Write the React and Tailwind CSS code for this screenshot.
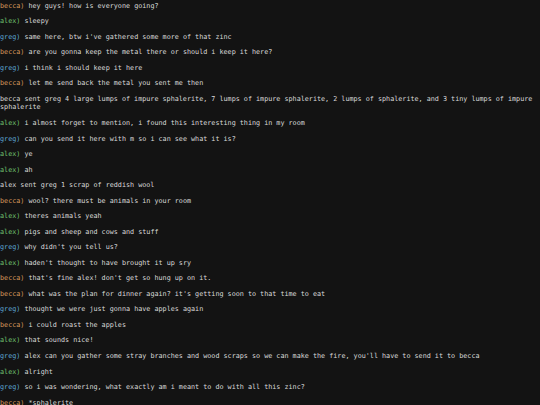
import React from "react";

const NAME_COLORS = {
  becca: "text-[#d8995c]",
  alex: "text-[#72c26f]",
  greg: "text-[#5ea7d4]",
};

const LINES = [
  ["becca", "hey guys! how is everyone going?"],
  ["alex", "sleepy"],
  ["greg", "same here, btw i've gathered some more of that zinc"],
  ["becca", "are you gonna keep the metal there or should i keep it here?"],
  ["greg", "i think i should keep it here"],
  ["becca", "let me send back the metal you sent me then"],
  [null, "becca sent greg 4 large lumps of impure sphalerite, 7 lumps of impure sphalerite, 2 lumps of sphalerite, and 3 tiny lumps of impure sphalerite"],
  ["alex", "i almost forget to mention, i found this interesting thing in my room"],
  ["greg", "can you send it here with m so i can see what it is?"],
  ["alex", "ye"],
  ["alex", "ah"],
  [null, "alex sent greg 1 scrap of reddish wool"],
  ["becca", "wool? there must be animals in your room"],
  ["alex", "theres animals yeah"],
  ["alex", "pigs and sheep and cows and stuff"],
  ["greg", "why didn't you tell us?"],
  ["alex", "haden't thought to have brought it up sry"],
  ["becca", "that's fine alex! don't get so hung up on it."],
  ["becca", "what was the plan for dinner again? it's getting soon to that time to eat"],
  ["greg", "thought we were just gonna have apples again"],
  ["becca", "i could roast the apples"],
  ["alex", "that sounds nice!"],
  ["greg", "alex can you gather some stray branches and wood scraps so we can make the fire, you'll have to send it to becca"],
  ["alex", "alright"],
  ["greg", "so i was wondering, what exactly am i meant to do with all this zinc?"],
  ["becca", "*sphalerite"],
];

export default function App() {
  return (
    <div className="w-[540px] h-[405px] overflow-hidden bg-[#131313] text-[#dadada] font-['DejaVu_Sans_Mono',monospace] text-[6.75px] leading-[8.7px] pt-[1.6px]">
      <div className="flex flex-col gap-[6.83px]">
        {LINES.map(([name, text], i) => (
          <p key={i} className="whitespace-pre-wrap break-words">
            {name && <span className={NAME_COLORS[name]}>{name}) </span>}
            {text}
          </p>
        ))}
      </div>
    </div>
  );
}
